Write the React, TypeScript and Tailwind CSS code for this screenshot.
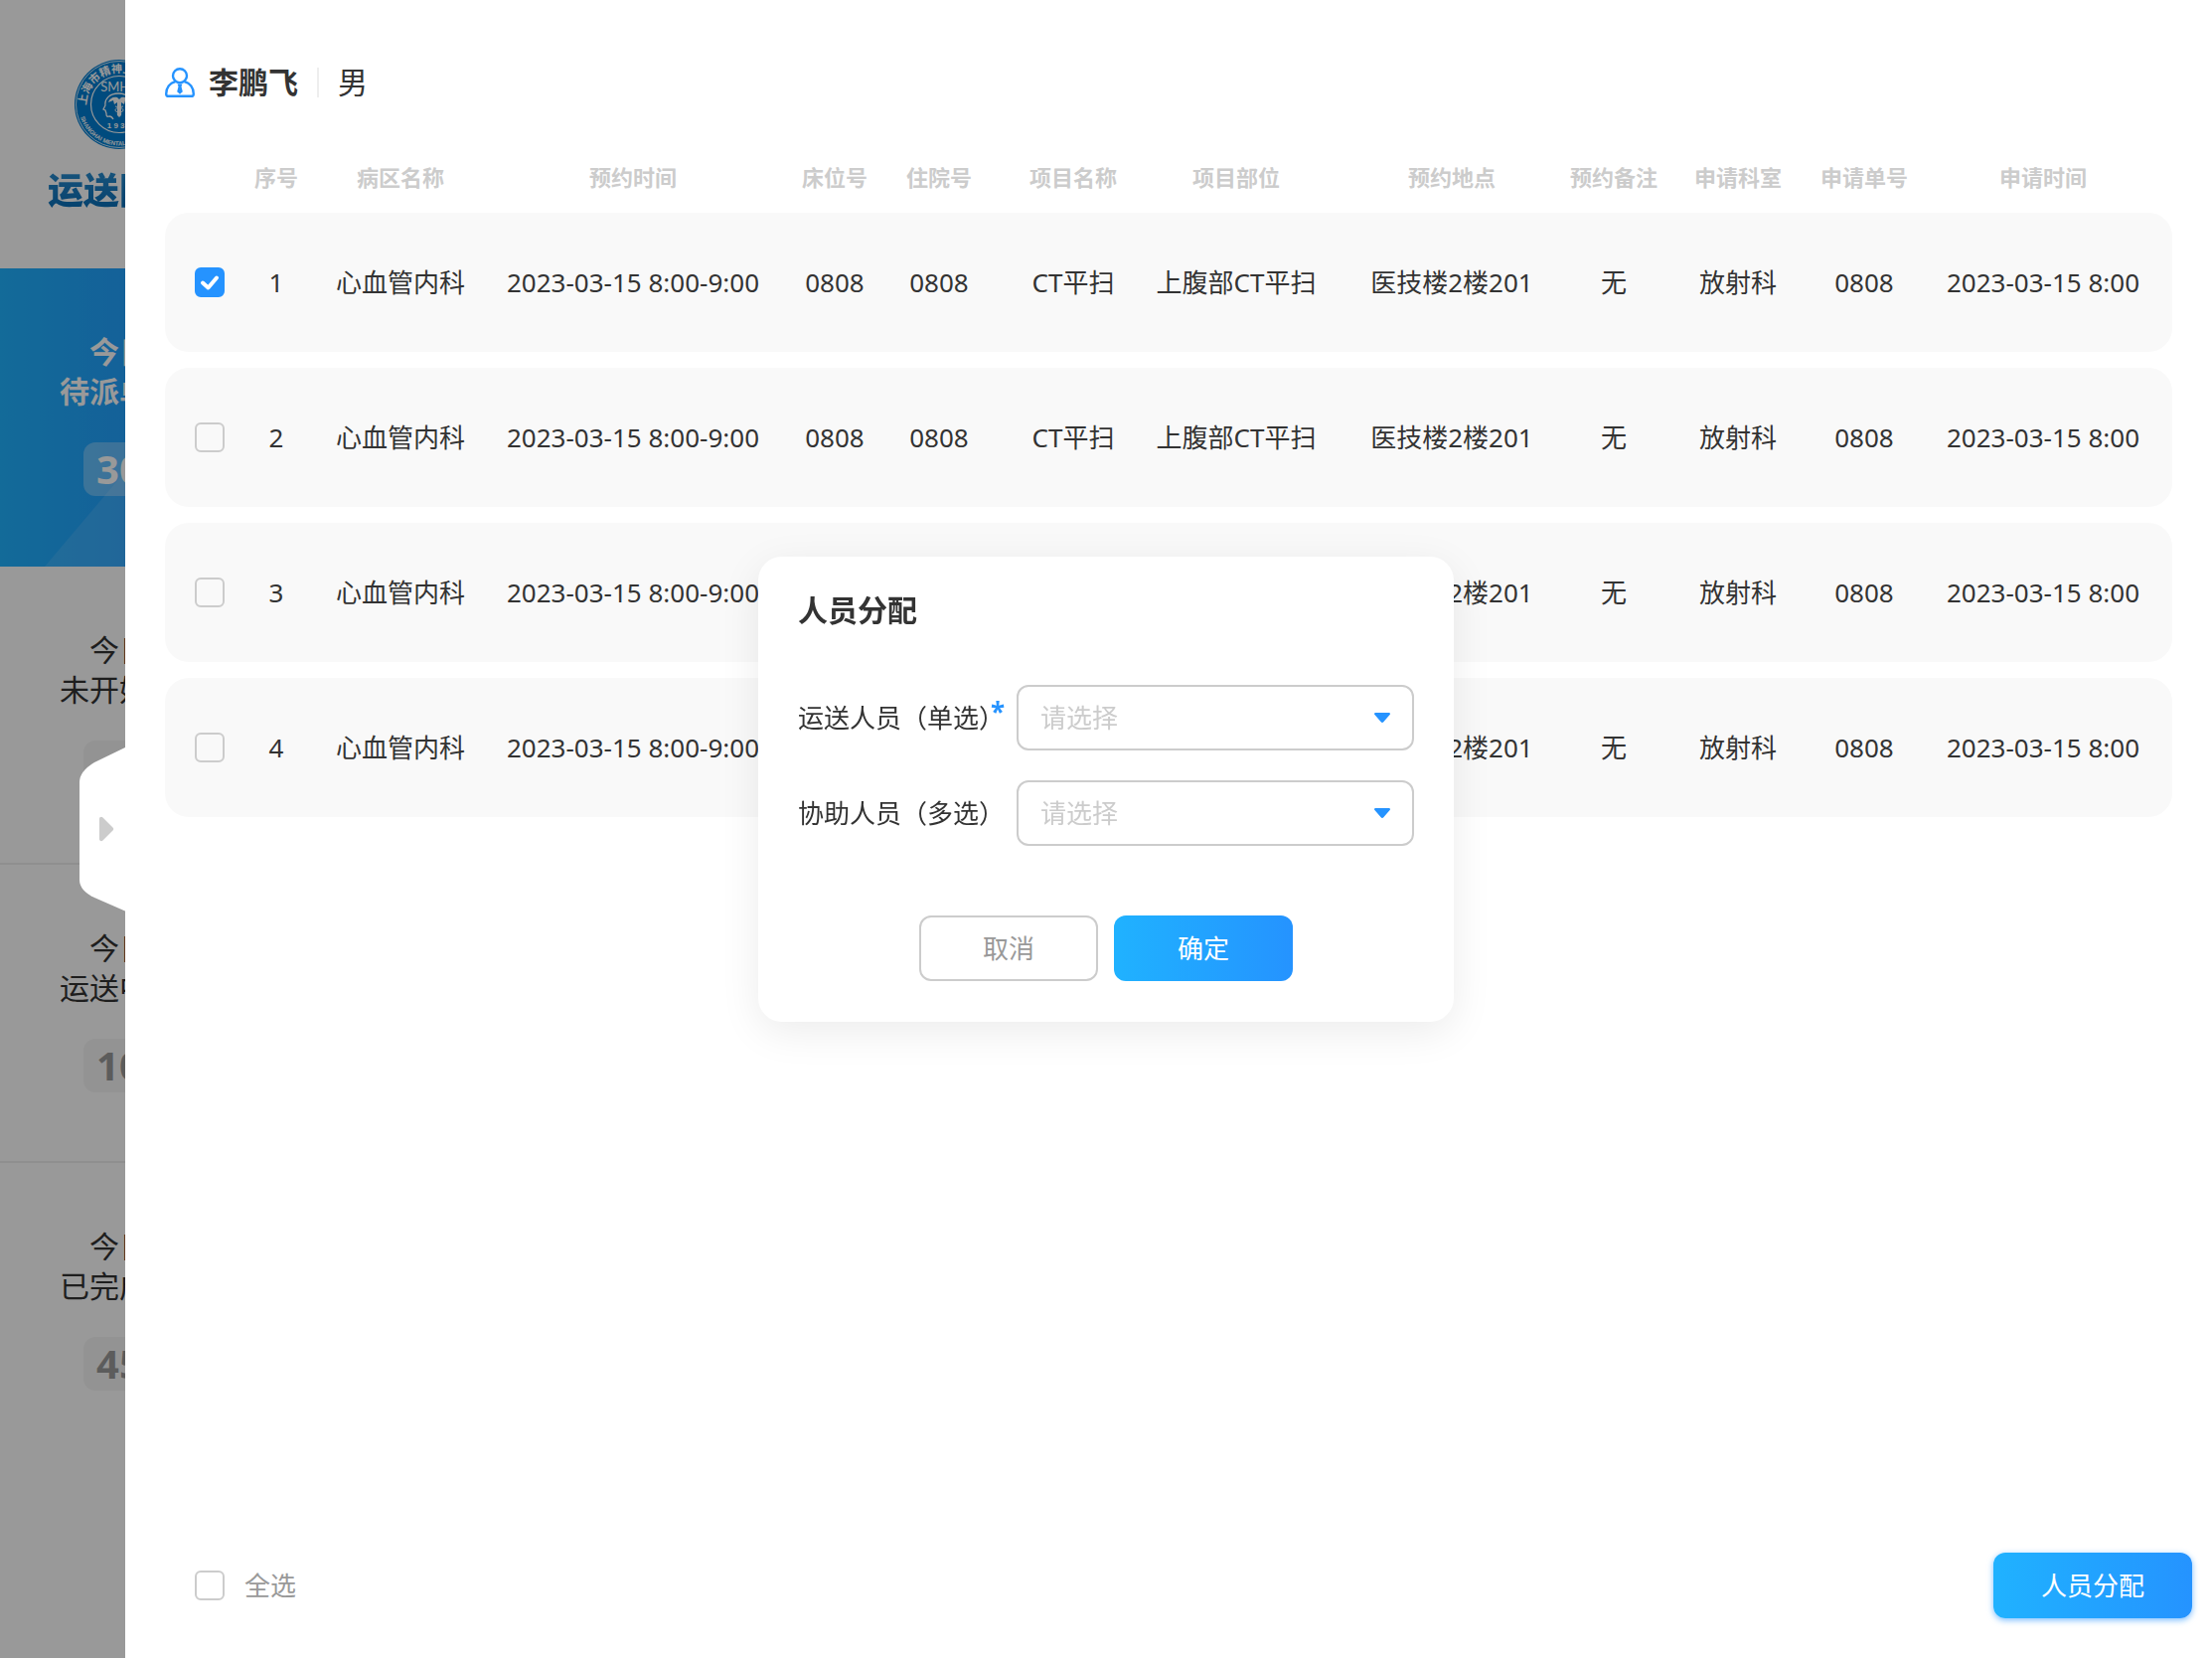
import { useState } from "react";
import clsx from "clsx";

const columns = [
  { title: "序号", width: "w-[84px]" },
  { title: "病区名称", width: "w-[166px]" },
  { title: "预约时间", width: "w-[302px]" },
  { title: "床位号", width: "w-[104px]" },
  { title: "住院号", width: "w-[106px]" },
  { title: "项目名称", width: "w-[164px]" },
  { title: "项目部位", width: "w-[164px]" },
  { title: "预约地点", width: "w-[250px]" },
  { title: "预约备注", width: "w-[96px]" },
  { title: "申请科室", width: "w-[154px]" },
  { title: "申请单号", width: "w-[100px]" },
  { title: "申请时间", width: "w-[260px]" },
];

const orders = [1, 2, 3, 4].map((id) => ({
  id,
  cells: [
    String(id),
    "心血管内科",
    "2023-03-15 8:00-9:00",
    "0808",
    "0808",
    "CT平扫",
    "上腹部CT平扫",
    "医技楼2楼201",
    "无",
    "放射科",
    "0808",
    "2023-03-15 8:00",
  ],
}));

const menus = [
  { day: "今日", label: "待派单数", count: 30 },
  { day: "今日", label: "未开始数", count: 0 },
  { day: "今日", label: "运送中数", count: 10 },
  { day: "今日", label: "已完成数", count: 45 },
];

function HospitalLogo() {
  return (
    <svg className="size-[90px]" viewBox="0 0 90 90" aria-hidden="true">
      <defs>
        <path id="ring-top" d="M12 46a33 33 0 0 1 66 0" />
        <path id="ring-bottom" d="M6 58a41 41 0 0 0 78 0" />
      </defs>
      <circle cx="45" cy="45" r="45" fill="#007dd2" />
      <circle cx="45" cy="45" r="43.5" fill="none" stroke="#fff" strokeOpacity="0.8" strokeWidth="1" />
      <circle cx="45" cy="45" r="28.5" fill="none" stroke="#fff" strokeWidth="1.2" />
      <text fill="#fff" fontSize="11" fontWeight="700">
        <textPath href="#ring-top">上海市精神卫生中心</textPath>
      </text>
      <text fill="#fff" fontSize="6" fontWeight="700" fontFamily="Liberation Sans">
        <textPath href="#ring-bottom">SHANGHAI MENTAL HEALTH CENTER</textPath>
      </text>
      <text x="45" y="32" textAnchor="middle" fill="#fff" fontSize="13" fontFamily="Lato">
        SMHC
      </text>
      <text x="45" y="69" textAnchor="middle" fill="#fff" fontSize="8" fontWeight="700" fontFamily="Liberation Sans">
        1 9 3 5
      </text>
      {/* head profile */}
      <path
        d="M39 60c-1-2-2-3-4-3-3 1-3-1-3-3l-1-3-2-1 2-4c-1-7 5-12 13-12 9 0 14 5 14 12 0 5-3 7-3 13"
        fill="none"
        stroke="#fff"
        strokeWidth="1.3"
      />
      {/* caduceus */}
      <path
        d="M34 43c1-4 5-6 9-5l2 2 2-2c4-1 8 1 9 5l-5-2-1 4-3-2v13l-2 2-2-2V43l-3 2-1-4z"
        fill="#fff"
      />
      <path d="M41 47c5 1 8 2 8 4s-6 2-6 4M49 47c-5 1-8 2-8 4s6 2 6 4" fill="none" stroke="#fff" />
    </svg>
  );
}

function UserIcon() {
  return (
    <svg className="size-[30px]" viewBox="0 0 30 30" fill="none" aria-hidden="true">
      <g stroke="#2593ff" strokeWidth="2.4">
        <circle cx="15" cy="8.2" r="7" />
        <path d="M10.500 14C4.800 15.600 1.200 20.500 1.200 26.400c0 1.600.9 2.400 2.400 2.400h22.800c1.500 0 2.400-.8 2.400-2.400 0-5.900-3.600-10.800-9.300-12.400" />
      </g>
      <path d="M12.500 16.500h5l-1 2.500 1.300 5.300-2.800 2.400-2.800-2.400 1.300-5.300z" fill="#2593ff" />
    </svg>
  );
}

function Checkbox({ id, checked, onChange, label }: {
  id: string;
  checked: boolean;
  onChange: () => void;
  label?: string;
}) {
  return (
    <span className="grid size-[30px] shrink-0">
      <input
        id={id}
        type="checkbox"
        checked={checked}
        onChange={onChange}
        aria-label={label}
        className="col-start-1 row-start-1 size-[30px] appearance-none rounded-md border-2 border-[#ccc] checked:border-[#2593ff] checked:bg-[#2593ff]"
      />
      {checked && (
        <svg
          className="pointer-events-none col-start-1 row-start-1 size-[30px]"
          viewBox="0 0 30 30"
          fill="none"
          stroke="#fff"
          strokeWidth="4"
          strokeLinecap="round"
          strokeLinejoin="round"
        >
          <path d="M8 15.500l5.500 5L22 10.500" />
        </svg>
      )}
    </span>
  );
}

function SelectField({ id, label, required }: { id: string; label: string; required?: boolean }) {
  return (
    <div className="flex items-center">
      <label htmlFor={id} className="relative w-[220px] shrink-0 whitespace-nowrap text-[26px]">
        {label}
        {required && (
          <span className="absolute -top-1.5 right-3 text-[26px] font-bold text-[#2593ff]">*</span>
        )}
      </label>
      <div className="grid flex-1 items-center">
        <select
          id={id}
          defaultValue=""
          className="col-start-1 row-start-1 h-[66px] w-full appearance-none rounded-xl border-2 border-[#ccc] bg-white px-[22px] text-[26px] text-[#ccc] outline-none"
        >
          <option value="">请选择</option>
        </select>
        <svg
          className="pointer-events-none col-start-1 row-start-1 mr-6 h-[10px] w-4 justify-self-end"
          viewBox="0 0 16 10"
          fill="#2593ff"
        >
          <path d="M1.500 0h13c1.300 0 1.900 1.200 1.100 2.100L9.300 9.300c-.7.900-1.900.9-2.600 0L.4 2.100C-.4 1.200.2 0 1.500 0z" />
        </svg>
      </div>
    </div>
  );
}

function Sidebar() {
  return (
    <aside className="relative w-[126px] shrink-0 overflow-hidden">
      <div className="w-60">
        <div className="flex h-[270px] flex-col items-center pt-[60px]">
          <HospitalLogo />
          <h1 className="mt-[18px] bg-linear-to-b from-[#2b8fd0] to-[#0069b4] bg-clip-text text-4xl leading-[48px] font-black text-transparent">
            运送团队
          </h1>
        </div>
        <nav>
          {menus.map((menu, index) => (
            <a
              key={menu.label}
              href="#"
              className={clsx(
                "relative flex h-[300px] flex-col items-center pt-16 text-[30px] leading-10",
                index === 0 && "bg-linear-to-r from-[#20b2ff] to-[#2593ff] font-bold text-white",
                (index === 1 || index === 2) && "border-b-2 border-[#eee]"
              )}
            >
              {index === 0 && (
                <svg className="absolute right-0 bottom-0 h-[130px] w-[195px]" viewBox="0 0 195 130">
                  <path d="M0 130L110 0h85v130z" fill="#fff" fillOpacity="0.1" />
                </svg>
              )}
              <span>{menu.day}</span>
              <span>{menu.label}</span>
              <span
                className={clsx(
                  "mt-[31px] min-w-[72px] rounded-xl px-3 text-center text-[40px] leading-[54px] font-bold",
                  index === 0 ? "bg-white/30 text-white" : "bg-[#f6f6f6] text-[#999]"
                )}
              >
                {menu.count}
              </span>
            </a>
          ))}
        </nav>
      </div>
      {/* mask under the drawer */}
      <div className="absolute inset-0 bg-black/40" />
    </aside>
  );
}

function AssignDialog({ onClose }: { onClose: () => void }) {
  return (
    <div className="fixed inset-0 flex items-center justify-center pb-20">
      <div
        role="dialog"
        aria-labelledby="assign-title"
        className="w-[700px] rounded-3xl bg-white px-10 pt-[39px] pb-[41px] shadow-[0_10px_40px_rgba(0,0,0,0.08)]"
      >
        <h2 id="assign-title" className="mb-[60px] text-[30px] leading-[30px] font-bold">
          人员分配
        </h2>
        <div className="flex flex-col gap-[30px]">
          <SelectField id="carrier" label="运送人员（单选）" required />
          <SelectField id="helper" label="协助人员（多选）" />
        </div>
        <div className="mt-[70px] flex justify-center gap-4 text-[26px]">
          <button
            type="button"
            onClick={onClose}
            className="h-[66px] w-[180px] rounded-xl border-2 border-[#ccc] bg-white text-[#999]"
          >
            取消
          </button>
          <button
            type="button"
            onClick={onClose}
            className="h-[66px] w-[180px] rounded-xl bg-linear-to-r from-[#20b2ff] to-[#2593ff] text-white"
          >
            确定
          </button>
        </div>
      </div>
    </div>
  );
}

export default function App() {
  const [selected, setSelected] = useState<number[]>([1]);
  const [open, setOpen] = useState(true);

  const toggle = (id: number) => {
    setSelected((prev) => (prev.includes(id) ? prev.filter((x) => x !== id) : [...prev, id]));
  };

  const allSelected = selected.length === orders.length;

  return (
    <div className="flex min-h-screen bg-white font-['Noto_Sans','Noto_Sans_CJK_SC',sans-serif] text-[#333]">
      <Sidebar />

      {/* DRAWER */}
      <main className="relative flex min-w-0 flex-1 flex-col bg-white pl-10">
        <button type="button" aria-label="收起" className="absolute top-1/2 -left-[46px] -translate-y-1/2">
          <svg className="h-[166px] w-[47px]" viewBox="0 0 47 166">
            <path d="M47 0.500L15 16Q0 25 0 36V134Q0 145 15 152L47 166z" fill="#fff" />
            <path d="M20 73c0-2 2-3 3.500-1.500l10 10c1 1 1 2 0 3l-10 10c-1.500 1.500-3.500.5-3.500-1.500z" fill="#ccc" />
          </svg>
        </button>

        <header className="flex h-[146px] items-start pt-[68px] text-[30px] leading-[30px]">
          <UserIcon />
          <span className="ml-3.5 font-bold">李鹏飞</span>
          <span className="mx-[19px] h-[30px] w-0.5 bg-[#eee]" />
          <span>男</span>
        </header>

        <div className="pr-10">
          <table className="w-full table-fixed border-separate border-spacing-x-0 border-spacing-y-4 text-center whitespace-nowrap">
            <thead>
              <tr className="text-[22px] leading-8 text-[#ccc]">
                <th className="w-[70px]" />
                {columns.map((col) => (
                  <th
                    key={col.title}
                    className={clsx("p-0 pb-1 font-bold", col.width, col.title === "预约地点" && "pl-5")}
                  >
                    {col.title}
                  </th>
                ))}
              </tr>
            </thead>
            <tbody>
              {orders.map((order) => (
                <tr key={order.id} className="h-[140px] text-[26px]">
                  <td className="rounded-l-3xl bg-[#f9f9f9] p-0 pl-[30px]">
                    <Checkbox
                      id={`order-${order.id}`}
                      label={`选择 ${order.id}`}
                      checked={selected.includes(order.id)}
                      onChange={() => toggle(order.id)}
                    />
                  </td>
                  {order.cells.map((cell, index) => (
                    <td
                      key={index}
                      className={clsx(
                        "bg-[#f9f9f9] p-0 last:rounded-r-3xl",
                        columns[index].title === "预约地点" && "pl-5"
                      )}
                    >
                      {cell}
                    </td>
                  ))}
                </tr>
              ))}
            </tbody>
          </table>
        </div>

        <footer className="mt-auto flex items-center justify-between pr-5 pb-10 pl-[30px] text-[26px]">
          <div className="flex items-center gap-5">
            <Checkbox
              id="select-all"
              checked={allSelected}
              onChange={() => setSelected(allSelected ? [] : orders.map((o) => o.id))}
            />
            <label htmlFor="select-all" className="text-[#999]">
              全选
            </label>
          </div>
          <button
            type="button"
            onClick={() => setOpen(true)}
            className="h-[66px] w-[200px] rounded-xl bg-linear-to-r from-[#20b2ff] to-[#2593ff] text-white shadow-[0_2px_6px_rgba(37,147,255,0.6)]"
          >
            人员分配
          </button>
        </footer>
      </main>

      {open && <AssignDialog onClose={() => setOpen(false)} />}
    </div>
  );
}
